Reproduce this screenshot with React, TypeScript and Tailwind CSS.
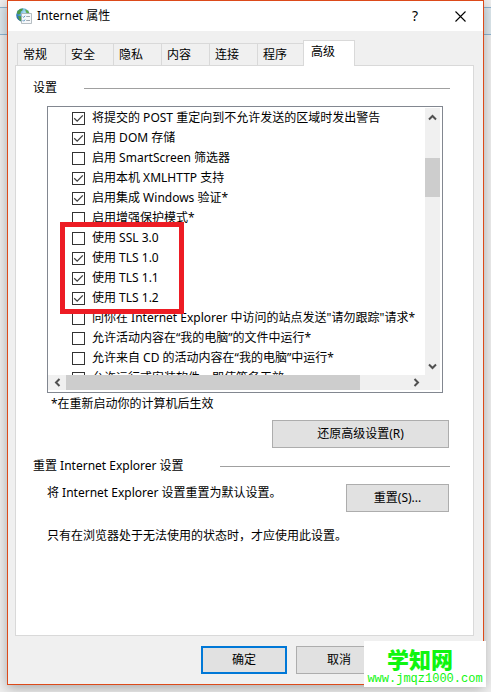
import React, { useState } from 'react';
import clsx from 'clsx';

const TABS = ['常规', '安全', '隐私', '内容', '连接', '程序', '高级'];

interface Option {
  label: string;
  checked: boolean;
}

const OPTIONS_BEFORE: Option[] = [
  { label: '将提交的 POST 重定向到不允许发送的区域时发出警告', checked: true },
  { label: '启用 DOM 存储', checked: true },
  { label: '启用 SmartScreen 筛选器', checked: false },
  { label: '启用本机 XMLHTTP 支持', checked: true },
  { label: '启用集成 Windows 验证*', checked: true },
  { label: '启用增强保护模式*', checked: false },
];

const OPTIONS_PROTOCOL: Option[] = [
  { label: '使用 SSL 3.0', checked: false },
  { label: '使用 TLS 1.0', checked: true },
  { label: '使用 TLS 1.1', checked: true },
  { label: '使用 TLS 1.2', checked: true },
];

const OPTIONS_AFTER: Option[] = [
  { label: '向你在 Internet Explorer 中访问的站点发送"请勿跟踪"请求*', checked: false },
  { label: '允许活动内容在“我的电脑”的文件中运行*', checked: false },
  { label: '允许来自 CD 的活动内容在“我的电脑”中运行*', checked: false },
  { label: '允许运行或安装软件，即使签名无效', checked: false },
];

function GlobeIcon() {
  return (
    <svg width="16" height="16" viewBox="0 0 16 16" aria-hidden="true">
      <defs>
        <radialGradient id="globe" cx="0.6" cy="0.3" r="0.8">
          <stop offset="0" stopColor="#b4e2f5" />
          <stop offset="0.5" stopColor="#4a9fd6" />
          <stop offset="1" stopColor="#15508f" />
        </radialGradient>
      </defs>
      <circle cx="7" cy="7" r="6.8" fill="url(#globe)" />
      <path d="M1.2 3.6 4 .9 7 .5 6.4 2.4 4.6 3.8 4.8 5.6 2.8 6.4 1 5.6z" fill="#4f9a45" />
      <path d="M9 1.2 12 2.8 13.5 5.6 12 6 10.2 4.4z" fill="#62ab4d" />
      <path d="M2 8 5 8.2 6 10 5.2 13.2 3.2 12z" fill="#4f9a45" />
      <path d="M5.5 5.5H15.5V15.5h-10z" fill="#f6f8fa" stroke="#a5adb4" strokeWidth="0.8" />
      <path d="M6.8 8.6l.8.8 1.4-1.6M6.8 12.4l.8.8 1.4-1.6" fill="none" stroke="#2f7ab8" strokeWidth="0.9" />
      <path d="M10.2 8.5h3.8M10.2 12.5h3.8" stroke="#a0a8b0" />
    </svg>
  );
}

function Chevron({ d }: { d: string }) {
  return (
    <svg width="9" height="9" viewBox="0 0 9 9" aria-hidden="true">
      <path d={d} fill="none" stroke="#505050" strokeWidth="2" />
    </svg>
  );
}

function OptionRow({ option }: { option: Option }) {
  const [checked, setChecked] = useState(option.checked);

  return (
    <label className="flex h-5 items-center gap-[7px] whitespace-nowrap pl-6">
      <span className="grid h-[13px] w-[13px] shrink-0">
        <input
          type="checkbox"
          checked={checked}
          onChange={(e) => setChecked(e.target.checked)}
          className="col-start-1 row-start-1 h-[13px] w-[13px] appearance-none border border-[#333333] bg-white"
        />
        {checked && (
          <svg
            className="pointer-events-none col-start-1 row-start-1"
            width="13"
            height="13"
            viewBox="0 0 13 13"
            aria-hidden="true"
          >
            <path d="M2.2 6.3 5.2 9.2 10.8 3.4" fill="none" stroke="#404040" strokeWidth="1.3" />
          </svg>
        )}
      </span>
      {option.label}
    </label>
  );
}

function PushButton({ children, className }: { children: React.ReactNode; className?: string }) {
  return (
    <button
      type="button"
      className={clsx('h-7 border bg-[#e1e1e1] text-center', className)}
    >
      {children}
    </button>
  );
}

function SettingsList() {
  return (
    <div className="ml-[30px] mr-[30px] grid h-[287px] grid-cols-[1fr_15px] grid-rows-[1fr_15px] border border-[#828790] pb-0.5 pr-0.5 pt-px">
      <div className="overflow-hidden">
        {OPTIONS_BEFORE.map((option) => (
          <OptionRow key={option.label} option={option} />
        ))}
        <div className="relative">
          {OPTIONS_PROTOCOL.map((option) => (
            <OptionRow key={option.label} option={option} />
          ))}
          {/* Highlight around the protocol options */}
          <div className="pointer-events-none absolute -bottom-1.5 -top-1.5 left-3 z-10 w-[124px] border-[5px] border-[#ed1c24]" />
        </div>
        {OPTIONS_AFTER.map((option) => (
          <OptionRow key={option.label} option={option} />
        ))}
      </div>

      {/* Vertical scrollbar */}
      <div className="flex flex-col items-center bg-[#f0f0f0]">
        <button type="button" aria-label="向上滚动" className="flex h-[18px] w-full items-center justify-center">
          <Chevron d="M1 6.5 4.5 3 8 6.5" />
        </button>
        <div className="mt-8 h-[39px] w-full bg-[#cdcdcd]" />
        <button type="button" aria-label="向下滚动" className="mt-auto flex h-[18px] w-full items-center justify-center">
          <Chevron d="M1 2.5 4.5 6 8 2.5" />
        </button>
      </div>

      {/* Horizontal scrollbar */}
      <div className="flex items-center bg-[#f0f0f0]">
        <button type="button" aria-label="向左滚动" className="flex h-full w-[18px] items-center justify-center">
          <Chevron d="M6.5 1 3 4.5 6.5 8" />
        </button>
        <div className="h-full w-[294px] bg-[#cdcdcd]" />
        <button type="button" aria-label="向右滚动" className="ml-auto flex h-full w-[18px] items-center justify-center">
          <Chevron d="M2.5 1 6 4.5 2.5 8" />
        </button>
      </div>
      <div className="bg-[#f0f0f0]" />
    </div>
  );
}

export default function App() {
  const [activeTab, setActiveTab] = useState('高级');

  return (
    <div className="relative isolate min-h-screen overflow-hidden bg-[#efefef] px-[7px] pb-[7px] font-['Noto_Sans','Noto_Sans_CJK_SC',sans-serif] text-[12px] leading-5 text-black">
      {/* Toolbar of the window behind the dialog */}
      <div className="absolute inset-x-0 top-[7px] -z-10 h-7 border-y border-[#8fb4d0] bg-[#dde8ee]" />

      <div className="border border-[#dc4a1a] bg-[#f0f0f0] shadow-[0_3px_12px_rgba(0,0,0,0.3)]">
        <header className="flex h-[30px] items-center bg-white pl-2">
          <GlobeIcon />
          <h1 className="ml-[5px] flex-1">Internet 属性</h1>
          <button type="button" aria-label="帮助" className="h-full w-11 text-center text-[14px]">
            ?
          </button>
          <button type="button" aria-label="关闭" className="flex h-full w-[46px] items-center justify-center">
            <svg width="11" height="11" viewBox="0 0 11 11" aria-hidden="true">
              <path d="M.5.5l10 10M10.5.5l-10 10" stroke="#000" strokeWidth="1.1" />
            </svg>
          </button>
        </header>

        <div className="pl-[7px] pr-[9px] pt-[9px]">
          <div role="tablist" className="flex items-end pl-0.5">
            {TABS.map((tab) => (
              <button
                key={tab}
                type="button"
                role="tab"
                aria-selected={tab === activeTab}
                onClick={() => setActiveTab(tab)}
                className={clsx(
                  'border-t border-[#d9d9d9] text-left',
                  tab === activeTab
                    ? '-mb-px -ml-0.5 h-[26px] w-[52px] border-x bg-white pb-1 pl-[7px]'
                    : 'h-[22px] w-12 border-l pl-[5px]',
                )}
              >
                {tab}
              </button>
            ))}
          </div>

          <div role="tabpanel" className="border border-[#d9d9d9] bg-white pb-[89px] pl-px pt-3">
            <div className="flex items-center pl-4 pr-[23px]">
              <h2 className="w-[51px]">设置</h2>
              <div className="h-px flex-1 bg-[#a0a0a0]" />
            </div>

            <div className="pt-2">
              <SettingsList />
            </div>

            <p className="pl-[34px] pt-px">*在重新启动你的计算机后生效</p>

            <div className="mt-1.5 flex justify-end pr-6">
              <PushButton className="w-[177px] border-[#adadad]">还原高级设置(R)</PushButton>
            </div>

            <div className="mt-2 flex items-center pl-4 pr-[23px]">
              <h2 className="w-[187px]">重置 Internet Explorer 设置</h2>
              <div className="h-px flex-1 bg-[#a0a0a0]" />
            </div>

            <div className="mt-2 flex items-start justify-between pl-[30px] pr-6">
              <p className="-mt-px">将 Internet Explorer 设置重置为默认设置。</p>
              <PushButton className="w-[103px] border-[#adadad]">重置(S)...</PushButton>
            </div>

            <p className="mt-3.5 pl-[30px]">只有在浏览器处于无法使用的状态时，才应使用此设置。</p>
          </div>
        </div>

        <footer className="flex justify-end gap-[9px] pb-2.5 pr-[101px] pt-2.5">
          <PushButton className="w-[86px] border-2 border-[#0078d7]">确定</PushButton>
          <PushButton className="w-[86px] border-[#adadad]">取消</PushButton>
        </footer>
      </div>

      {/* Site watermark */}
      <div className="absolute bottom-[5px] right-[5px] flex w-[122px] flex-col items-center bg-white pb-0.5 pt-1 text-[#10f510]">
        <span className="pr-2.5 text-[22px] font-black leading-7">学知网</span>
        <span className="font-['Liberation_Mono',monospace] text-[12px] leading-3">www.jmqz1000.com</span>
      </div>
    </div>
  );
}
